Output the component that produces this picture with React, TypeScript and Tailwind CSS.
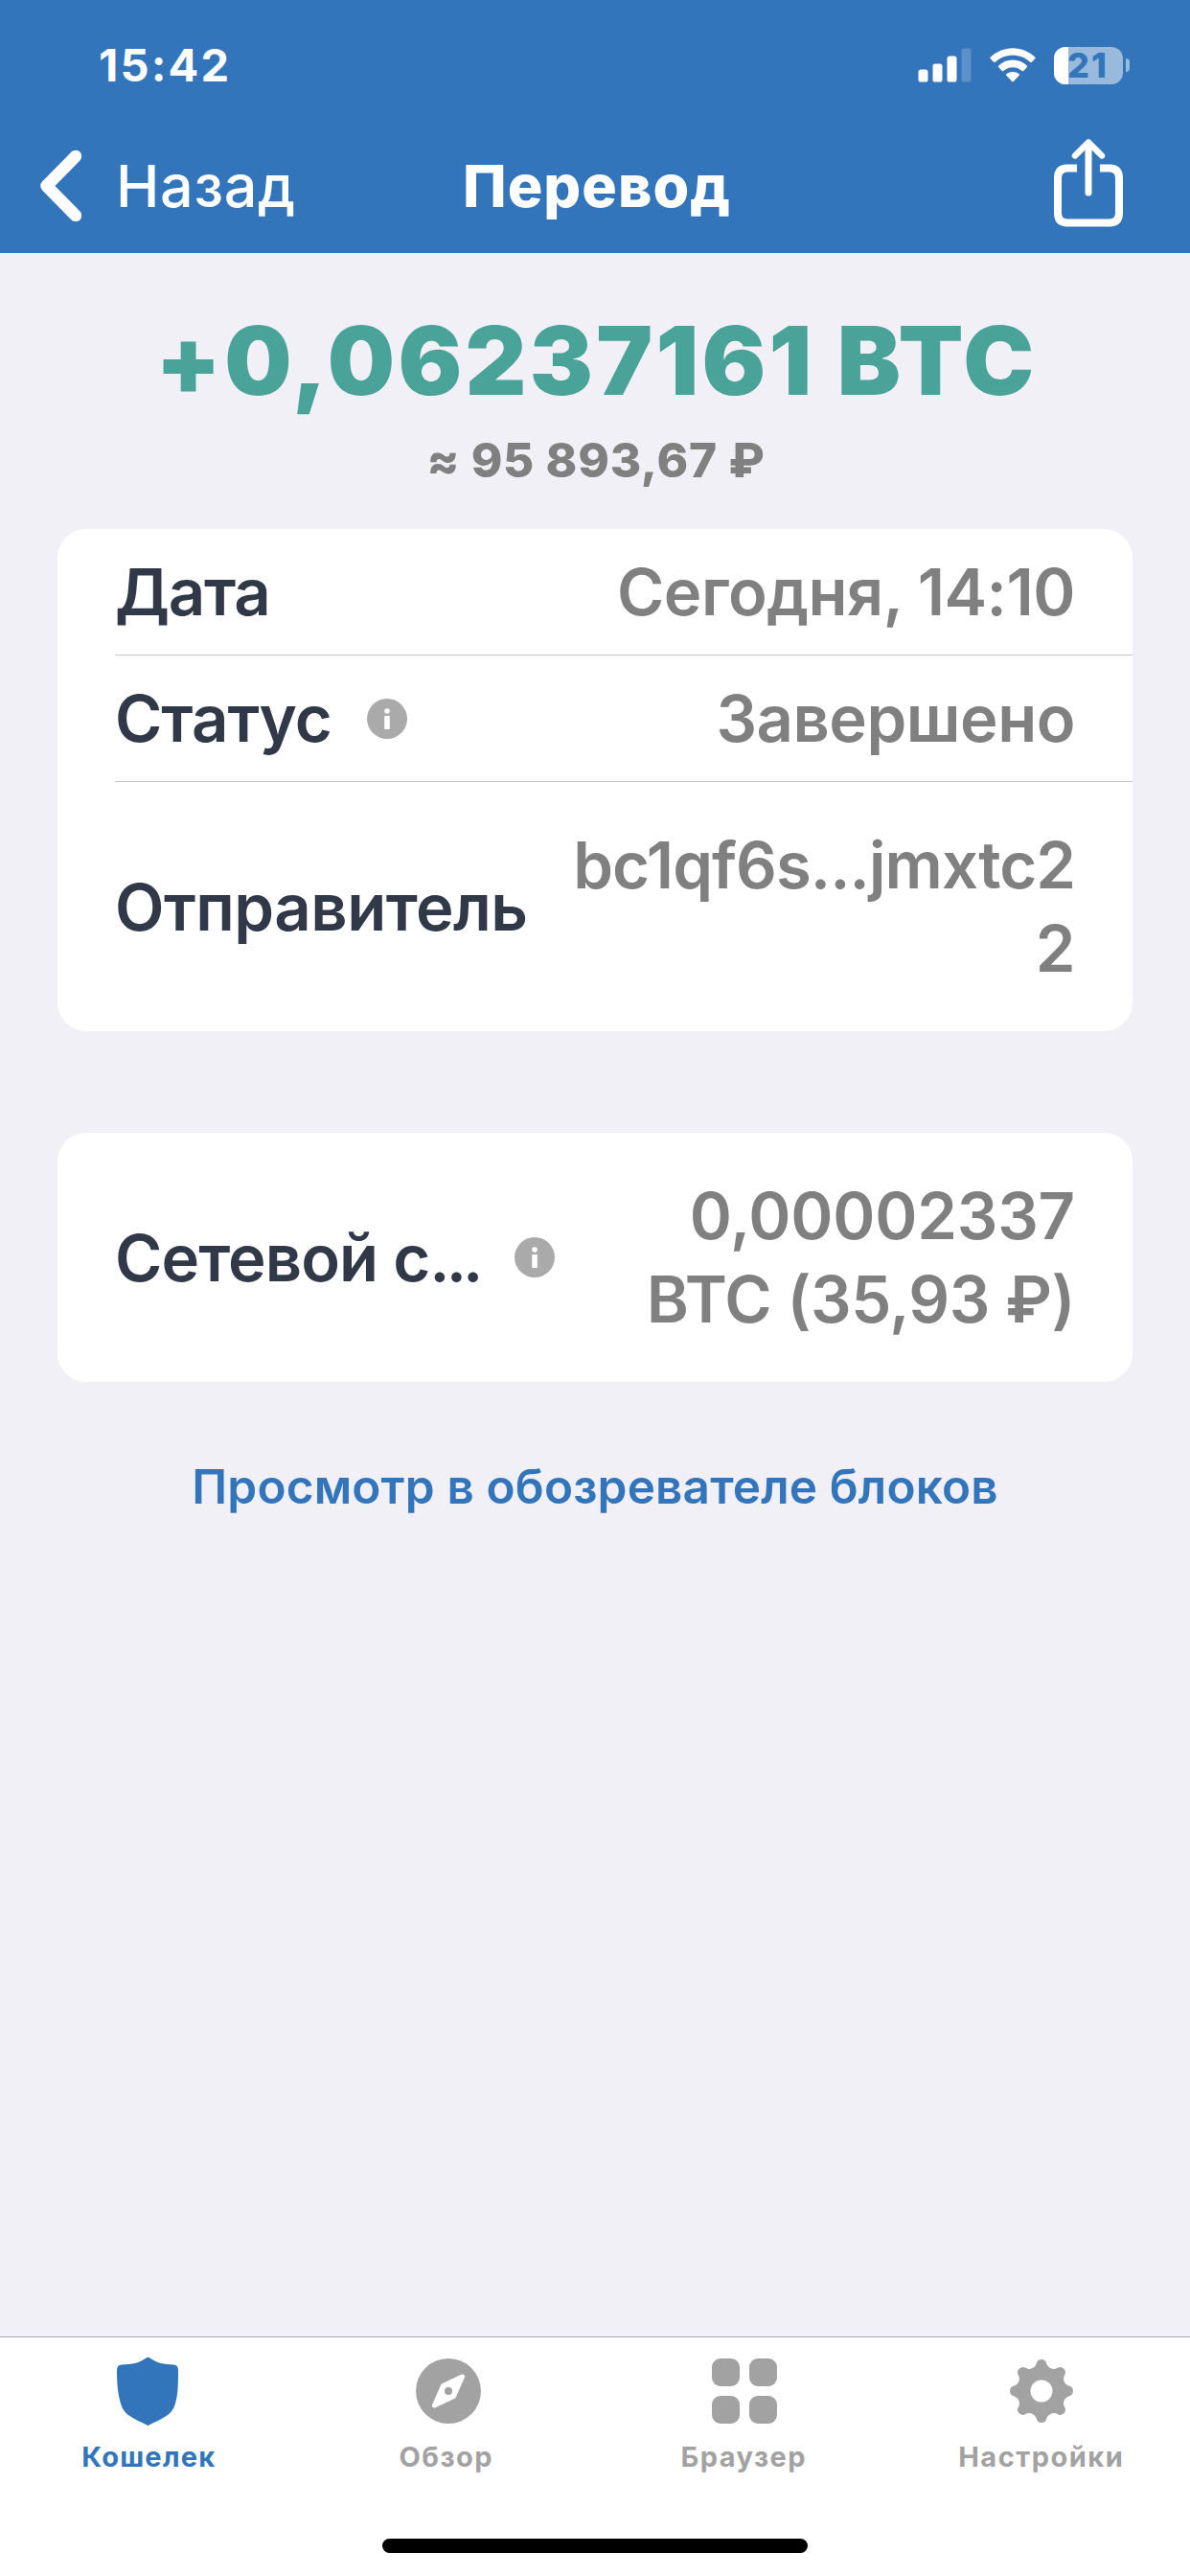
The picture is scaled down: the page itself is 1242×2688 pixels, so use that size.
import type { ReactNode } from "react";

interface RowProps {
  label: ReactNode;
  info?: boolean;
  children: ReactNode;
  className?: string;
  labelClass?: string;
  last?: boolean;
}

// Outline of the eight-tooth gear, centred on 0,0
const gearPath = (() => {
  const point = (x: number, y: number, deg: number) => {
    const a = (deg * Math.PI) / 180;
    const px = x * Math.cos(a) - y * Math.sin(a);
    const py = x * Math.sin(a) + y * Math.cos(a);
    return `${px.toFixed(2)} ${py.toFixed(2)}`;
  };
  let d = `M${point(-5.2, -29, 0)}`;
  for (let i = 0; i < 8; i++) {
    d += `A5.4 5.4 0 0 1 ${point(5.2, -29, i * 45)}`;
    d += `A7.9 7.9 0 0 0 ${point(-5.2, -29, (i + 1) * 45)}`;
  }
  return `${d}ZM11.5 0A11.5 11.5 0 1 0 -11.5 0A11.5 11.5 0 1 0 11.5 0Z`;
})();

const InfoIcon = () => (
  <svg className="h-[42px] w-[42px] shrink-0" viewBox="0 0 42 42">
    <circle cx="21" cy="21" r="21" fill="#aaaaaa" />
    <circle cx="21" cy="13" r="2.8" fill="#fff" />
    <rect x="18.2" y="18" width="5.6" height="14" rx="0.6" fill="#fff" />
  </svg>
);

const StatusBar = () => (
  <div className="flex h-[136px] items-center justify-between pl-[103px] pr-[63px]">
    <span className="pb-px text-[47px] font-bold leading-none tracking-[2.2px]">15:42</span>
    <div className="flex items-center">
      <svg className="h-[36px] w-[56px]" viewBox="0 0 56 36" fill="#fff">
        <rect x="0.5" y="22.5" width="10" height="13" rx="2.6" />
        <rect x="15.5" y="16.5" width="10" height="19" rx="2.6" />
        <rect x="30.5" y="8.5" width="10" height="27" rx="2.6" />
        <rect x="45.5" y="0.5" width="10" height="35" rx="2.6" fillOpacity="0.2" />
      </svg>
      <svg className="ml-[19px] h-[36px] w-[48px]" viewBox="0 0 48 36" fill="#fff">
        <path d="M24 0.2C33 0.2 41.2 3.8 47.2 9.6Q48 10.5 47.3 11.3L43.8 14.8Q43 15.5 42.2 14.8C37.4 10.3 31 7.7 24 7.7S10.6 10.3 5.8 14.8Q5 15.5 4.2 14.8L0.7 11.3Q0 10.5 0.8 9.6C6.8 3.8 15 0.2 24 0.2Z" />
        <path d="M24 12.6C29.8 12.6 34.9 14.9 38.8 18.5Q39.6 19.3 38.9 20.1L35.2 23.9Q34.5 24.6 33.7 23.9C31 21.6 27.7 20.2 24 20.2S17 21.6 14.3 23.9Q13.5 24.6 12.8 23.9L9.1 20.1Q8.4 19.3 9.2 18.5C13.1 14.9 18.2 12.6 24 12.6Z" />
        <path d="M24 25C26.6 25 28.9 25.9 30.6 27.3Q31.4 28 30.7 28.8L24.7 35.1Q24 35.8 23.3 35.1L17.3 28.8Q16.6 28 17.4 27.3C19.1 25.9 21.4 25 24 25Z" />
      </svg>
      <div className="relative ml-[19px] flex h-[39px] w-[72px] rounded-[12px] bg-white/50">
        <div className="h-full w-[15px] rounded-l-[12px] bg-white" />
        <span className="absolute -top-[4px] left-[14px] text-[36px] font-extrabold leading-[46px] tracking-[2px] text-[#3275bb]">
          21
        </span>
      </div>
      <div className="ml-[3px] h-[14px] w-[4px] rounded-r-full bg-white/50" />
    </div>
  </div>
);

const NavBar = () => (
  <div className="grid h-[128px] grid-cols-3 items-center pb-[12px]">
    <div className="flex items-center pl-[41px]">
      <svg className="h-[74px] w-[44px]" viewBox="0 0 44 74" fill="none">
        <path d="M38 6L7.5 37L38 68" stroke="#fff" strokeWidth="12.5" strokeLinecap="round" strokeLinejoin="round" />
      </svg>
      <span className="ml-[36px] text-[61px] font-medium leading-none tracking-[0.66px]">Назад</span>
    </div>
    <h1 className="pl-[4px] text-center text-[61px] font-extrabold leading-none tracking-[1px]">Перевод</h1>
    <div className="flex justify-end pr-[69px] pb-[7px]">
      <svg className="h-[92px] w-[74px]" viewBox="0 0 74 92" fill="none" stroke="#fff" strokeWidth="8">
        <path d="M25 30.5H15Q5 30.5 5 41V77Q5 87.5 15 87.5H59Q69 87.5 69 77V41Q69 30.5 59 30.5H49" />
        <path d="M37 5V56" strokeWidth="7" strokeLinecap="round" />
        <path d="M23 17.5L37 3.5L51 17.5" strokeWidth="6.5" strokeLinecap="round" strokeLinejoin="round" />
      </svg>
    </div>
  </div>
);

const Card = ({ children }: { children: ReactNode }) => (
  <section className="mx-[60px] overflow-hidden rounded-[30px] bg-white pl-[60px] text-[67px] font-semibold tracking-[-0.5px]">
    {children}
  </section>
);

const Row = ({ label, info, children, className = "h-[132px]", labelClass = "", last }: RowProps) => (
  <div
    className={`flex items-center justify-between whitespace-nowrap pr-[60px] leading-[87px] ${className} ${
      last ? "" : "border-b border-[#c6c6c8]"
    }`}
  >
    <div className="flex items-center text-[#313848]">
      <span className={labelClass}>{label}</span>
      {info && (
        <span className="ml-[37px]">
          <InfoIcon />
        </span>
      )}
    </div>
    <div className="text-right text-[#808080]">{children}</div>
  </div>
);

const TabBar = () => (
  <nav className="flex h-[250px] flex-col items-center border-t border-[#a7a7aa] bg-white">
    <div className="grid w-full grid-cols-4 pt-[16px] text-[29px] font-bold tracking-[1.5px] text-[#a2a2a2]">
      <div className="flex flex-col items-center text-[#3275bb]">
        <svg className="h-[80px] w-[80px]" viewBox="-40 -40 80 80" fill="currentColor">
          <path d="M-2.5 -34.5Q-0.5 -36.2 1.5 -34.5C8.5 -29 16 -27.8 26 -27.5Q31 -27.3 31 -21.5C31 -4 30.5 4 28 13C25 23 20 26.5 0.5 35.5Q-0.5 36.5 -1.5 35.5C-21 26.5 -26 23 -29 13C-31.5 4 -33 -4 -33 -21.5Q-33 -27.3 -28 -27.5C-17 -27.8 -9.5 -29 -2.5 -34.5Z" />
        </svg>
        <span className="mt-[10px] leading-[37px] tracking-[1.25px]">Кошелек</span>
      </div>
      <div className="flex flex-col items-center">
        <svg className="h-[80px] w-[80px]" viewBox="-42 -40 80 80" fill="currentColor">
          <circle r="34" />
          <path d="M14.5 -15L-5.5 -5.5L-14.5 15L5.5 5.5Z" fill="#fff" stroke="#fff" strokeWidth="5" strokeLinejoin="round" />
          <circle r="4" />
        </svg>
        <span className="mt-[10px] leading-[37px]">Обзор</span>
      </div>
      <div className="flex flex-col items-center">
        <svg className="h-[80px] w-[80px]" viewBox="-41 -40 80 80" fill="currentColor">
          <rect x="-34" y="-34" width="29" height="29" rx="9" />
          <rect x="5" y="-34" width="29" height="29" rx="9" />
          <rect x="-34" y="5" width="29" height="29" rx="9" />
          <rect x="5" y="5" width="29" height="29" rx="9" />
        </svg>
        <span className="mt-[10px] leading-[37px]">Браузер</span>
      </div>
      <div className="flex flex-col items-center">
        <svg className="h-[80px] w-[80px]" viewBox="-40 -40 80 80" fill="currentColor">
          <path d={gearPath} fillRule="evenodd" />
        </svg>
        <span className="mt-[10px] leading-[37px]">Настройки</span>
      </div>
    </div>
    {/* Home indicator */}
    <div className="mt-auto mb-[24px] h-[15px] w-[444px] rounded-full bg-black" />
  </nav>
);

export default function App() {
  return (
    <div className="flex h-[2688px] w-[1242px] flex-col bg-[#f1f0f6] font-[Inter,'Liberation_Sans',sans-serif]">
      <header className="h-[264px] shrink-0 bg-[#3275bb] text-white">
        <StatusBar />
        <NavBar />
      </header>

      <main className="flex-1">
        <div className="flex h-[288px] flex-col items-center whitespace-nowrap">
          <p className="mt-[52px] pl-[3px] text-[99px] font-black leading-[120px] tracking-[3.28px] text-[#4aa398]">
            +0,06237161 BTC
          </p>
          <p className="mt-[14px] pl-[2px] text-[49.5px] font-extrabold leading-[60px] tracking-[0.7px] text-[#808080]">
            ≈ 95 893,67 ₽
          </p>
        </div>

        <Card>
          <Row label="Дата" labelClass="tracking-[-1.3px]">
            Сегодня, 14:10
          </Row>
          <Row label="Статус" labelClass="tracking-[-1px]" info>
            Завершено
          </Row>
          <Row label="Отправитель" className="h-[260px]" last>
            <span className="tracking-[-0.97px]">bc1qf6s...jmxtc2</span>
            <br />2
          </Row>
        </Card>

        <div className="mt-[106px]">
          <Card>
            <Row
              label={
                <>
                  Сетевой с<span className="tracking-[-4px]">...</span>
                </>
              }
              labelClass="tracking-[-0.9px]"
              info
              className="h-[260px]"
              last
            >
              <span className="tracking-[-0.2px]">0,00002337</span>
              <br />
              BTC (35,93 ₽)
            </Row>
          </Card>
        </div>

        <p className="mt-[79px] text-center text-[49.5px] font-semibold leading-[60px] tracking-[0.15px] text-[#3275bb]">
          Просмотр в обозревателе блоков
        </p>
      </main>

      <TabBar />
    </div>
  );
}
